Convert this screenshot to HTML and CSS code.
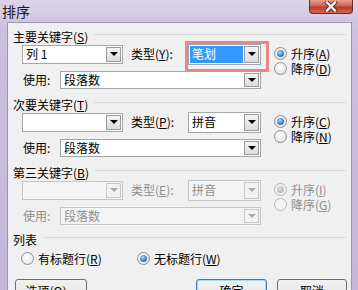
FILE: index.html
```html
<!DOCTYPE html>
<html lang="zh-CN">
  <head>
    <meta charset="utf-8" />
    <title>排序</title>
    <link rel="stylesheet" href="styles.css">
  </head>

  <body>
    <div class="window">
      <div class="titlebar">
        <span class="title">排序</span>
        <span class="close">
          <svg width="14" height="11" viewBox="0 0 14 11">
            <path d="M3 1.5 L11 9.5 M11 1.5 L3 9.5" stroke="#5a1f18" stroke-width="4" stroke-linecap="square" />
            <path d="M3 1.5 L11 9.5 M11 1.5 L3 9.5" stroke="#fff" stroke-width="2.4" stroke-linecap="square" />
          </svg>
        </span>
      </div>

      <div class="client">
        <section class="group">
          <div class="group-head"><span>主要关键字(<u>S</u>)</span><i class="rule"></i></div>
          <div class="group-body">
            <div class="fields">
              <div class="key-row">
                <div class="combo key"><span class="value">列 1</span><span class="drop"></span></div>
                <span class="type-label">类型(<u>Y</u>):</span>
                <div class="combo type marked"><span class="value selected">笔划</span><span class="drop"></span></div>
              </div>
              <div class="use-row">
                <span class="use-label">使用:</span>
                <div class="combo use"><span class="value">段落数</span><span class="drop"></span></div>
              </div>
            </div>
            <div class="order">
              <div class="radio"><span class="dot on"></span>升序(<u>A</u>)</div>
              <div class="radio"><span class="dot"></span>降序(<u>D</u>)</div>
            </div>
          </div>
        </section>

        <section class="group">
          <div class="group-head"><span>次要关键字(<u>T</u>)</span><i class="rule"></i></div>
          <div class="group-body">
            <div class="fields">
              <div class="key-row">
                <div class="combo key"><span class="value"></span><span class="drop"></span></div>
                <span class="type-label">类型(<u>P</u>):</span>
                <div class="combo type"><span class="value">拼音</span><span class="drop"></span></div>
              </div>
              <div class="use-row">
                <span class="use-label">使用:</span>
                <div class="combo use"><span class="value">段落数</span><span class="drop"></span></div>
              </div>
            </div>
            <div class="order">
              <div class="radio"><span class="dot on"></span>升序(<u>C</u>)</div>
              <div class="radio"><span class="dot"></span>降序(<u>N</u>)</div>
            </div>
          </div>
        </section>

        <section class="group off">
          <div class="group-head"><span>第三关键字(<u>B</u>)</span><i class="rule"></i></div>
          <div class="group-body">
            <div class="fields">
              <div class="key-row">
                <div class="combo key"><span class="value"></span><span class="drop"></span></div>
                <span class="type-label">类型(<u>E</u>):</span>
                <div class="combo type"><span class="value">拼音</span><span class="drop"></span></div>
              </div>
              <div class="use-row">
                <span class="use-label">使用:</span>
                <div class="combo use"><span class="value">段落数</span><span class="drop"></span></div>
              </div>
            </div>
            <div class="order">
              <div class="radio"><span class="dot on"></span>升序(<u>I</u>)</div>
              <div class="radio"><span class="dot"></span>降序(<u>G</u>)</div>
            </div>
          </div>
        </section>

        <section class="list">
          <div class="group-head"><span>列表</span><i class="rule"></i></div>
          <div class="list-row">
            <div class="radio first"><span class="dot"></span>有标题行(<u>R</u>)</div>
            <div class="radio"><span class="dot on"></span>无标题行(<u>W</u>)</div>
          </div>
        </section>

        <div class="buttons">
          <button class="btn options">选项(<u>O</u>)...</button>
          <button class="btn ok">确定</button>
          <button class="btn cancel">取消</button>
        </div>
      </div>
    </div>
  </body>
</html>
```

FILE: styles.css
```css
* {
  box-sizing: border-box;
}

html,
body {
  margin: 0;
  padding: 0;
}

body {
  width: 358px;
  height: 290px;
  overflow: hidden;
  font-family: 'Noto Sans CJK SC', 'Liberation Sans', sans-serif;
  font-size: 12px;
  line-height: 14px;
  color: #000;
}

u {
  text-decoration: underline;
}

.window {
  width: 358px;
  height: 290px;
  display: flex;
  flex-direction: column;
  background: linear-gradient(#dcd4ea, #cbc0df 30px, #c3b7d9);
}

.titlebar {
  height: 22px;
  flex-shrink: 0;
  display: flex;
  justify-content: space-between;
  align-items: flex-start;
}

.title {
  font-size: 14px;
  line-height: 16px;
  margin: 3px 0 0 2px;
  color: #1a1a1a;
}

.close {
  width: 44px;
  height: 14px;
  margin-right: 5px;
  display: flex;
  align-items: center;
  justify-content: center;
  border: 1px solid #6b2a22;
  border-top: none;
  border-radius: 0 0 4px 4px;
  background: linear-gradient(#e6a396, #d0604e 45%, #b93a2a 55%, #d26a4c);
}

.client {
  flex: 1;
  margin: 0 6px 0 7px;
  padding: 7px 0 0 5px;
  background: #f0f0f0;
  border: 1px solid #9d93b4;
  border-bottom: none;
}

.group + .group {
  margin-top: 9px;
}

.group-head {
  display: flex;
  height: 14px;
  white-space: nowrap;
}

.rule {
  flex: 1;
  height: 1px;
  margin: 4px 5px 0 6px;
  background: #d5dce2;
}

.group-body {
  display: flex;
}

.key-row {
  display: flex;
  align-items: center;
  height: 20px;
  margin-left: 9px;
}

.type-label {
  width: 57px;
  margin-left: 8px;
  white-space: nowrap;
}

.use-row {
  display: flex;
  align-items: center;
  height: 18px;
  margin-top: 7px;
  padding-left: 10px;
}

.use-label {
  width: 37px;
}

.combo {
  position: relative;
  display: flex;
  align-items: stretch;
  height: 19px;
  padding: 1px;
  background: #fff;
  border: 1px solid #a2a6ab;
}

.combo.key {
  width: 101px;
}

.combo.type {
  width: 73px;
  height: 21px;
}

.combo.use {
  width: 201px;
  height: 18px;
}

.value {
  flex: 1;
  display: flex;
  align-items: center;
  padding-left: 2px;
  white-space: nowrap;
}

.value.selected {
  background: #3399ff;
  color: #fff;
  margin-right: 1px;
}

.drop {
  width: 15px;
  display: flex;
  align-items: center;
  justify-content: center;
  background: linear-gradient(#f4f4f4, #dcdcdc);
  border: 1px solid #9a9a9a;
}

.drop::after {
  content: '';
  border-left: 4px solid transparent;
  border-right: 4px solid transparent;
  border-top: 4px solid #000;
}

/* red annotation box round the first type field */
.combo.marked::after {
  content: '';
  position: absolute;
  left: -4px;
  top: -4px;
  right: -9px;
  bottom: -8px;
  border: 3px solid #ec8686;
}

.order {
  margin-left: 13px;
  padding-top: 2px;
}

.radio {
  display: flex;
  align-items: center;
  height: 15px;
  white-space: nowrap;
}

.dot {
  position: relative;
  width: 13px;
  height: 13px;
  margin-right: 4px;
  border-radius: 50%;
  border: 1px solid #8e9093;
  background: radial-gradient(circle at 45% 40%, #fff, #e6e6e6 70%, #d6d6d6);
}

.dot.on::after {
  content: '';
  position: absolute;
  left: 2px;
  top: 2px;
  width: 7px;
  height: 7px;
  border-radius: 50%;
  background: radial-gradient(circle at 40% 35%, #a8dcf8, #3b86c0 55%, #0f4d85);
}

/* disabled third key */
.off .fields,
.off .order {
  color: #8f8f8f;
}

.off .combo {
  background: #f4f4f4;
  border-color: #c3c6c9;
}

.off .drop {
  border-color: #c8c8c8;
  background: #f2f2f2;
}

.off .drop::after {
  border-top-color: #a8a8a8;
}

.off .dot {
  border-color: #b5b7b9;
  background: #f2f2f2;
}

.off .dot.on::after {
  background: radial-gradient(circle at 40% 35%, #e0e0e0, #a5a5a5);
}

.list {
  margin-top: 8px;
}

.list-row {
  display: flex;
  margin-top: 4px;
  padding-left: 8px;
}

.radio.first {
  width: 116px;
}

.buttons {
  display: flex;
  margin-top: 13px;
  padding-right: 4px;
}

.btn {
  height: 23px;
  padding: 0;
  font-family: inherit;
  font-size: 12px;
  line-height: 14px;
  color: #000;
  border: 1px solid #707070;
  border-radius: 3px;
  background: linear-gradient(#f2f2f2, #ebebeb 45%, #dddddd 50%, #cfcfcf);
}

.btn.options {
  width: 72px;
  margin-left: 2px;
}

.btn.ok {
  width: 71px;
  margin-left: auto;
  border-color: #3c7fb1;
  box-shadow: inset 0 0 0 1px #9fdbf6;
}

.btn.cancel {
  width: 70px;
  margin-left: 10px;
}
```
